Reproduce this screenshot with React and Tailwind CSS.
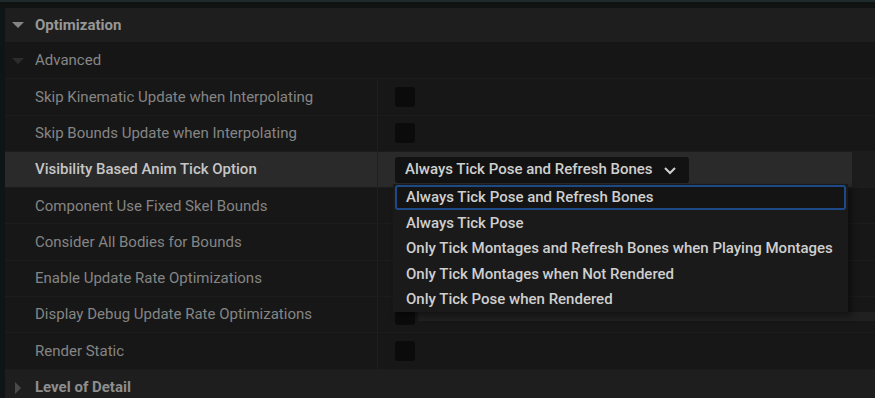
const rows = [
  { label: "Skip Kinematic Update when Interpolating", check: true },
  { label: "Skip Bounds Update when Interpolating", check: true },
  { label: "Visibility Based Anim Tick Option", combo: true },
  { label: "Component Use Fixed Skel Bounds", check: true },
  { label: "Consider All Bodies for Bounds", check: true },
  { label: "Enable Update Rate Optimizations", check: true },
  { label: "Display Debug Update Rate Optimizations", check: true },
  { label: "Render Static", check: true },
];

const options = [
  "Always Tick Pose and Refresh Bones",
  "Always Tick Pose",
  "Only Tick Montages and Refresh Bones when Playing Montages",
  "Only Tick Montages when Not Rendered",
  "Only Tick Pose when Rendered",
];

function Tri({ down, color }) {
  return (
    <svg width="12" height="12" viewBox="0 0 12 12" className="shrink-0">
      {down ? (
        <path d="M0 3 L12 3 L6 9 Z" fill={color} />
      ) : (
        <path d="M3 0 L9 6 L3 12 Z" fill={color} />
      )}
    </svg>
  );
}

function Check() {
  return <div className="w-[20px] h-[20px] rounded-[3px] bg-[#0b0b0b]" />;
}

function Row({ row }) {
  const hot = row.combo;
  return (
    <div
      className={`flex h-[36.3px] border-b border-[#1c1c1c] ${
        hot ? "bg-[#2a2a2a]" : "bg-[#171717]"
      }`}
    >
      <div
        className={`w-[373px] flex items-center pl-[30px] border-r border-[#1f1f1f] ${
          hot ? "text-[#c6c6c6] font-medium" : "text-[#858585]"
        }`}
      >
        {row.label}
      </div>
      <div className="flex-1 flex items-center pl-[17px]">
        {row.check && <Check />}
        {row.combo && (
          <div className="w-[294px] h-[26px] rounded-[3px] bg-[#121212] flex items-center justify-between pl-[10px] pr-[12px] text-[#cfcfcf] font-medium">
            <span>Always Tick Pose and Refresh Bones</span>
            <svg width="14" height="14" viewBox="0 0 14 14">
              <path d="M2 5 L7 10 L12 5" stroke="#d0d0d0" strokeWidth="2" fill="none" />
            </svg>
          </div>
        )}
      </div>
      <div className={`w-[23px] ${hot ? "bg-[#1c1c1c]" : ""}`} />
    </div>
  );
}

export default function App() {
  return (
    <div
      className="relative w-[875px] h-[398px] overflow-hidden bg-[#121414] text-[15px]"
      style={{ fontFamily: "Roboto, 'Liberation Sans', sans-serif" }}
    >
      <div className="h-[2px] bg-[#1e2a2c]" />
      <div className="h-[6px] bg-[#111212]" />
      <div className="flex">
        <div className="w-[5px] bg-[#0f1517]" />
        <div className="flex-1 flex flex-col">
          {/* Optimization header */}
          <div className="h-[35px] bg-[#1e1e1e] flex items-center gap-[11px] pl-[7px] border-b border-[#161616]">
            <Tri down color="#858585" />
            <span className="font-bold text-[#979797]">Optimization</span>
          </div>
          {/* Advanced */}
          <div className="h-[36.3px] bg-[#161616] flex items-center gap-[11px] pl-[7px] border-b border-[#1c1c1c]">
            <Tri down color="#2c2c2c" />
            <span className="text-[#868686]">Advanced</span>
          </div>
          {rows.map((r) => (
            <Row key={r.label} row={r} />
          ))}
          {/* Level of Detail */}
          <div className="h-[36px] bg-[#1e1e1e] flex items-center gap-[11px] pl-[7px]">
            <Tri color="#4a4a4a" />
            <span className="font-bold text-[#8e8e8e]">Level of Detail</span>
          </div>
        </div>
      </div>

      {/* dropdown menu */}
      <div className="absolute left-[418px] top-[312px] w-[457px] h-[9px] bg-[#202020]" />
      <div className="absolute left-[393px] top-[184px] w-[455px] h-[128px] bg-[#1a1a1a] shadow-[4px_4px_6px_rgba(0,0,0,0.4)] pt-[1px] px-[2px] text-[#cfcfcf] font-medium">
        {options.map((o, i) => (
          <div
            key={o}
            className={`h-[25.4px] flex items-center pl-[9px] rounded-[3px] ${
              i === 0 ? "border-2 border-[#1d4a86] bg-[#141414]" : "border-2 border-transparent"
            }`}
          >
            {o}
          </div>
        ))}
      </div>
    </div>
  );
}
